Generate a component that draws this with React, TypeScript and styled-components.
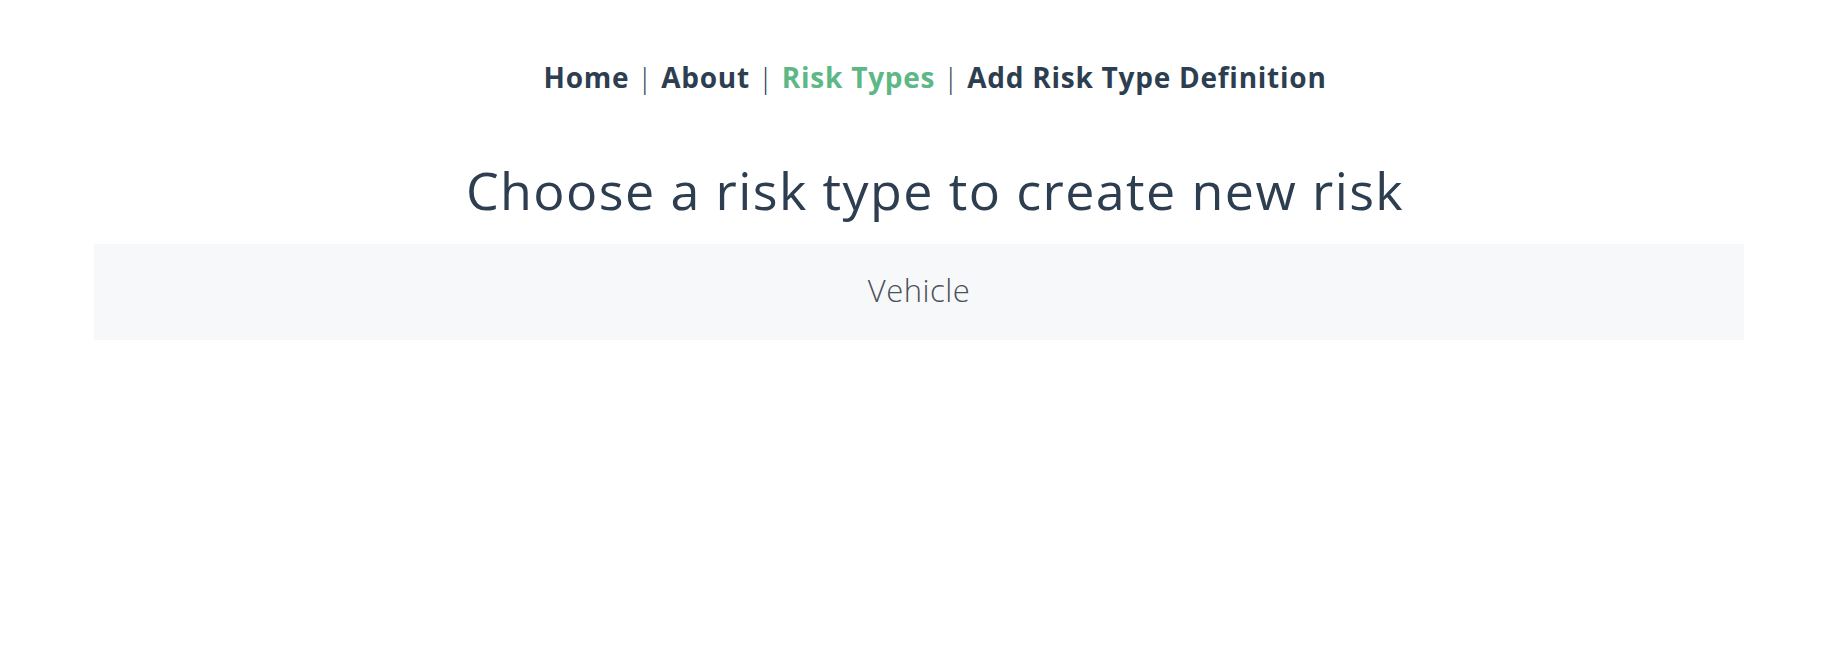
import React from "react";
import styled, { createGlobalStyle } from "styled-components";

const Global = createGlobalStyle`
  html, body { margin: 0; padding: 0; background: #ffffff; }
  body { font-family: "Open Sans", Lato, Arial, sans-serif; color: #2c3e50; -webkit-font-smoothing: antialiased; }
`;

const Page = styled.div`
  display: flex;
  flex-direction: column;
  text-align: center;
`;

const Header = styled.div`
  padding-left: 40px;
  display: flex;
  flex-direction: column;
  align-items: center;
`;

const Nav = styled.nav`
  padding-top: 62px;
  font-size: 28px;
  line-height: 30px;
  letter-spacing: 0.75px;
  color: #2c3e50;
`;

const NavLink = styled.a<{ $active?: boolean }>`
  font-weight: 700;
  color: ${(p) => (p.$active ? "#5db886" : "#2c3e50")};
  text-decoration: none;
`;

const Sep = styled.span`
  font-weight: 300;
  color: #2c3e50;
`;

const Title = styled.h1`
  margin: 70px 0 0;
  font-size: 52px;
  line-height: 56px;
  letter-spacing: 1.4px;
  font-weight: 400;
  color: #2c3e50;
`;

const List = styled.div`
  margin: 26px 86px 0 94px;
  display: flex;
  flex-direction: column;
`;

const Item = styled.div`
  background: #f7f8fa;
  height: 96px;
  box-sizing: border-box;
  padding-bottom: 4px;
  display: flex;
  align-items: center;
  justify-content: center;
  font-size: 31px;
  letter-spacing: 0.5px;
  font-weight: 300;
  color: #4b5058;
`;

const links = [
  { label: "Home" },
  { label: "About" },
  { label: "Risk Types", active: true },
  { label: "Add Risk Type Definition" },
];

export default function App() {
  return (
    <Page>
      <Global />
      <Header>
        <Nav>
          {links.map((l, i) => (
            <React.Fragment key={l.label}>
              <NavLink href="#" $active={l.active}>{l.label}</NavLink>
              {i < links.length - 1 && <Sep> | </Sep>}
            </React.Fragment>
          ))}
        </Nav>
        <Title>Choose a risk type to create new risk</Title>
      </Header>
      <List>
        <Item>Vehicle</Item>
      </List>
    </Page>
  );
}
